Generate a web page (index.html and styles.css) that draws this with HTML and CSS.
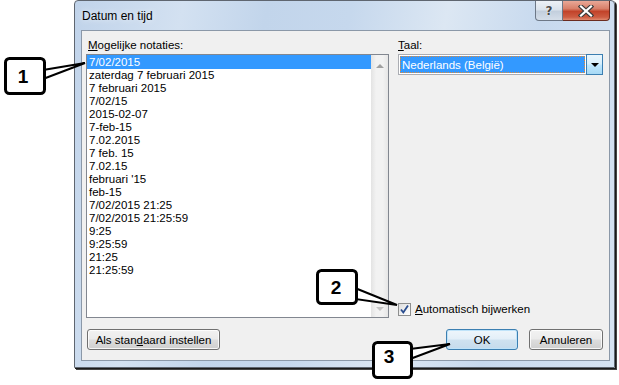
FILE: index.html
```html
<!DOCTYPE html>
<html>
<head>
<meta charset="utf-8">
<link rel="stylesheet" href="styles.css">
</head>
<body>
<div class="screen">
  <div class="window">
    <div class="titlebar">
      <span class="title">Datum en tijd</span>
      <div class="caption-btns">
        <div class="cap help"><span>?</span></div>
        <div class="cap close">
          <svg width="16" height="12" viewBox="0 0 16 12">
            <path d="M3 1.5 L13 10.5 M13 1.5 L3 10.5" stroke="#3a3a3a" stroke-width="4.4" stroke-linecap="square"/>
            <path d="M3 1.5 L13 10.5 M13 1.5 L3 10.5" stroke="#ffffff" stroke-width="2.2" stroke-linecap="square"/>
          </svg>
        </div>
      </div>
    </div>
    <div class="client">
      <div class="main">
        <div class="col-left">
          <div class="label"><u>M</u>ogelijke notaties:</div>
          <div class="listbox">
            <div class="items">
              <div class="row selected">7/02/2015</div>
              <div class="row">zaterdag 7 februari 2015</div>
              <div class="row">7 februari 2015</div>
              <div class="row">7/02/15</div>
              <div class="row">2015-02-07</div>
              <div class="row">7-feb-15</div>
              <div class="row">7.02.2015</div>
              <div class="row">7 feb. 15</div>
              <div class="row">7.02.15</div>
              <div class="row">februari '15</div>
              <div class="row">feb-15</div>
              <div class="row">7/02/2015 21:25</div>
              <div class="row">7/02/2015 21:25:59</div>
              <div class="row">9:25</div>
              <div class="row">9:25:59</div>
              <div class="row">21:25</div>
              <div class="row">21:25:59</div>
            </div>
            <div class="scrollbar">
              <div class="arrow up"></div>
              <div class="arrow down"></div>
            </div>
          </div>
        </div>
        <div class="col-right">
          <div class="label"><u>T</u>aal:</div>
          <div class="combo">
            <div class="combo-value"><span>Nederlands (België)</span></div>
            <div class="combo-btn"><span class="tri"></span></div>
          </div>
          <div class="check">
            <span class="box">
              <svg width="11" height="11" viewBox="0 0 11 11"><path d="M2 5.5 L4.3 8.5 L9 1.5" fill="none" stroke="#2a4d8f" stroke-width="1.8"/></svg>
            </span>
            <span class="check-label"><u>A</u>utomatisch bijwerken</span>
          </div>
        </div>
      </div>
      <div class="footer">
        <div class="btn wide">Als stan<u>d</u>aard instellen</div>
        <div class="btn default">OK</div>
        <div class="btn">Annuleren</div>
      </div>
    </div>
  </div>

  <svg class="callouts" width="619" height="385" viewBox="0 0 619 385">
    <g stroke="#000" stroke-width="2" fill="#fff" stroke-linejoin="miter">
      <polygon points="43,70 85,63 43,79"/>
      <polygon points="355,288 397,305 355,299"/>
      <polygon points="410,349 450,344 410,359"/>
    </g>
    <g stroke="#000" stroke-width="3" fill="#fff">
      <rect x="5.5" y="58.5" width="39" height="35" rx="4"/>
      <rect x="317.5" y="270.5" width="39" height="33" rx="4"/>
      <rect x="373.5" y="342.5" width="38" height="35" rx="4"/>
    </g>
    <g class="callout-num">
      <text x="23" y="83">1</text>
      <text x="336" y="294">2</text>
      <text x="389" y="363">3</text>
    </g>
  </svg>
</div>
</body>
</html>
```
FILE: styles.css
```css
* { box-sizing: border-box; }
html, body { margin: 0; padding: 0; background: #ffffff; }
body { font-family: "Liberation Sans", Arial, sans-serif; font-size: 11.5px; color: #000; }

.screen { position: relative; width: 619px; height: 385px; overflow: hidden; }

.window {
  margin-left: 74px;
  width: 541px;
  height: 368px;
  border: 1px solid #5f6670;
  border-radius: 4px 4px 0 0;
  padding: 0 4px 6px 6px;
  background: linear-gradient(100deg, #c0d3ea 0%, #d3e1f1 18%, #c2d5eb 32%, #c6d8ed 46%, #dce7f3 62%, #c7d9ee 78%, #d6e3f2 100%);
  box-shadow: 1px 1px 0 #1a1a1a, 2px 2px 0 #444;
  display: flex;
  flex-direction: column;
}

.titlebar {
  height: 29px;
  display: flex;
  align-items: flex-start;
  justify-content: space-between;
}
.title {
  font-size: 12px;
  margin-top: 8px;
  margin-left: 1px;
  color: #000;
  text-shadow: 0 0 6px rgba(255,255,255,0.9);
}
.caption-btns { display: flex; margin-right: 0; }
.cap {
  height: 20px;
  display: flex;
  align-items: center;
  justify-content: center;
  border: 1px solid #6d7887;
  border-top: none;
}
.help {
  width: 28px;
  border-radius: 0 0 0 4px;
  background: linear-gradient(#edf1f6 0%, #dbe3ec 45%, #c3cfdd 55%, #d5dee9 100%);
}
.help span {
  font-family: "DejaVu Sans", sans-serif;
  font-weight: bold;
  font-size: 12px;
  color: #4a4a4a;
  text-shadow: 0 0 1px #fff, 0 0 1px #fff;
}
.close {
  width: 47px;
  border-left: none;
  border-color: #6b2b1f;
  border-radius: 0 0 4px 0;
  background: linear-gradient(#e9a897 0%, #d8806a 40%, #c2432a 55%, #cd5c42 85%, #e08a6f 100%);
}

.client {
  flex: 1;
  background: #f0f0f0;
  border: 1px solid #8b98a8;
  padding: 7px 6px 9px 4px;
  display: flex;
  flex-direction: column;
}

.main {
  display: grid;
  grid-template-columns: 303px 205px;
  column-gap: 9px;
}
.label { height: 16px; line-height: 14px; padding-left: 2px; }
.col-right .label { padding-left: 0; }

.listbox {
  height: 264px;
  border: 1px solid #828790;
  background: #fff;
  display: flex;
}
.items { flex: 1; padding-top: 0; }
.row { height: 13px; line-height: 13px; padding-left: 2px; white-space: nowrap; }
.row.selected { height: 14px; line-height: 14px; background: #3399ff; color: #fff; }

.scrollbar {
  width: 17px;
  background: linear-gradient(90deg, #e3e3e3 0%, #f2f2f2 30%, #f2f2f2 70%, #e6e6e6 100%);
  display: flex;
  flex-direction: column;
  justify-content: space-between;
  align-items: center;
  padding: 9px 0 6px;
}
.arrow { width: 0; height: 0; border-left: 4px solid transparent; border-right: 4px solid transparent; }
.arrow.up { border-bottom: 4px solid #a0a0a0; }
.arrow.down { border-top: 4px solid #c4c4c4; }

.col-right { display: flex; flex-direction: column; }
.combo {
  height: 21px;
  border: 1px solid #abadb3;
  background: #fff;
  display: flex;
  padding: 1px;
}
.combo-value {
  flex: 1;
  background: #3399ff;
  color: #fff;
  border: 1px dotted #e08a3a;
  display: flex;
  align-items: center;
  padding-left: 1px;
}
.combo-btn {
  width: 17px;
  margin: -2px -2px -2px 1px;
  border: 1px solid #3c7fb1;
  background: linear-gradient(#eaf6fd 0%, #d9f0fc 45%, #bee6fd 55%, #a7d9f5 100%);
  display: flex;
  align-items: center;
  justify-content: center;
}
.tri { width: 0; height: 0; border-left: 4px solid transparent; border-right: 4px solid transparent; border-top: 4px solid #000; }

.check {
  margin-top: auto;
  margin-bottom: 1px;
  display: flex;
  align-items: center;
  height: 16px;
}
.box {
  width: 13px;
  height: 13px;
  border: 1px solid #8e8f8f;
  background: linear-gradient(135deg, #dcdcdc 0%, #f4f4f4 60%, #ffffff 100%);
  display: flex;
  align-items: center;
  justify-content: center;
  margin-right: 4px;
}
.check-label { line-height: 14px; }

.footer {
  margin-top: 11px;
  display: flex;
  align-items: center;
}
.btn {
  height: 21px;
  border: 1px solid #707070;
  border-radius: 3px;
  background: linear-gradient(#f2f2f2 0%, #ebebeb 48%, #dddddd 52%, #cfcfcf 100%);
  display: flex;
  align-items: center;
  justify-content: center;
  box-shadow: inset 0 0 0 1px rgba(255,255,255,0.8);
}
.btn.wide { width: 133px; margin-left: 1px; margin-right: auto; }
.btn.default {
  width: 72px;
  border-color: #3c7fb1;
  background: linear-gradient(#eef6fb 0%, #e3eff8 48%, #cfe2f0 52%, #c5dbec 100%);
  box-shadow: inset 0 0 0 1px #bfe3f9;
}
.btn:last-child { width: 74px; margin-left: 11px; }

.callouts { position: absolute; left: 0; top: 0; pointer-events: none; }
.callout-num text {
  font-family: "Liberation Sans", Arial, sans-serif;
  font-weight: bold;
  font-size: 19px;
  text-anchor: middle;
  fill: #000;
}
```
